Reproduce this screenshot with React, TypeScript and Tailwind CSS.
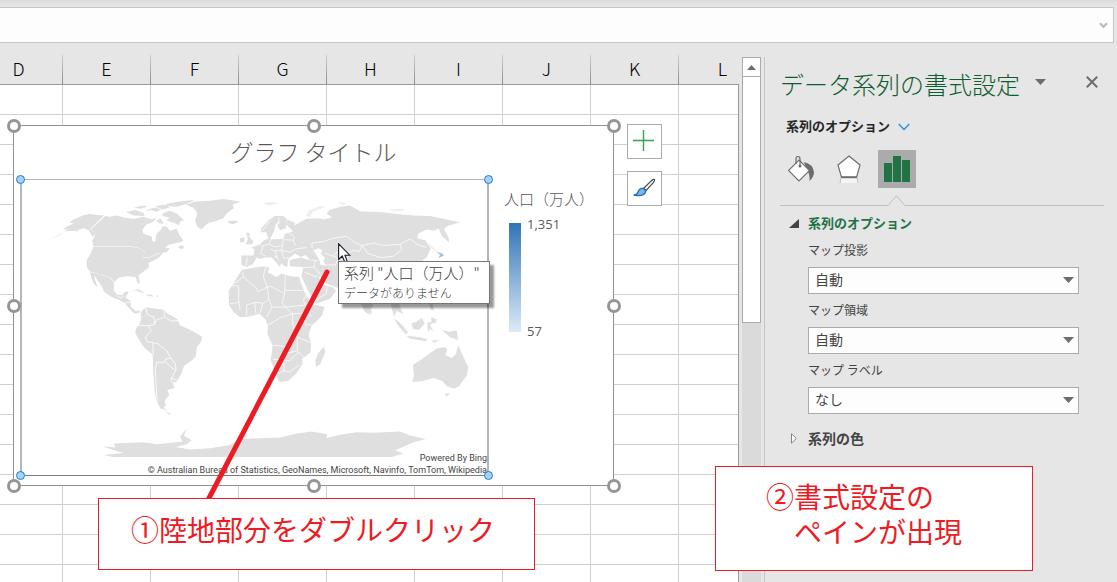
import React from "react";

const columns = ["D", "E", "F", "G", "H", "I", "J", "K", "L"];
const rows = Array.from({ length: 17 }, (_, i) => i + 1);

const jp = "font-['Noto_Sans_CJK_JP',sans-serif]";

function DownTriangle() {
  return (
    <svg className="h-[6px] w-[11px]" viewBox="0 0 11 6" aria-hidden="true">
      <path d="M0 0H11L5.5 6Z" fill="#6d6d6d" />
    </svg>
  );
}

function FormulaBar() {
  return (
    <div className="shrink-0 bg-gradient-to-b from-[#dcdcdc] to-[#e6e6e6] to-[6px] pr-[3px] pt-[7px]">
      <div className="flex h-9 items-center border border-l-0 border-[#c6c6c6] bg-[#fdfdfd] pr-[5px]">
        <input aria-label="数式バー" className="h-full min-w-0 flex-1 bg-transparent px-2 outline-none" />
        <button aria-label="数式バーの展開" className="p-0">
          <svg width="9" height="7" viewBox="0 0 9 7">
            <path d="M1 1.2L4.5 4.8L8 1.2" fill="none" stroke="#bcbcbc" strokeWidth="2.2" />
          </svg>
        </button>
      </div>
    </div>
  );
}

function Grid() {
  return (
    <table className="-ml-[25px] w-[792px] table-fixed border-separate border-spacing-0">
      <thead>
        <tr>
          {columns.map((c) => (
            <th key={c} className="h-[42px] border-b border-[#999] bg-[#e6e6e6] p-0 align-bottom font-light">
              <div className="flex h-[29px]">
                <span className="flex-1 text-center text-[18px] leading-[26px] text-black">{c}</span>
                <span className={c === "L" ? "w-px" : "w-px bg-gradient-to-b from-[#d0d0d0] to-[#8c8c8c]"} />
              </div>
            </th>
          ))}
        </tr>
      </thead>
      <tbody>
        {rows.map((r) => (
          <tr key={r}>
            {columns.map((c) => (
              <td key={c} className="h-[30px] border-b border-r border-[#d0d0d0] bg-white p-0" />
            ))}
          </tr>
        ))}
      </tbody>
    </table>
  );
}

function WorldMap() {
  return (
    <svg className="block h-full w-full" viewBox="22 180 465 294" preserveAspectRatio="none" role="img" aria-label="世界地図">
      {/* Americas */}
      <g transform="translate(10 170) scale(.33333)" fill="#dfdfdf">
        <path d="M105 211L130 203L150 196L162 187L150 191L128 202Z" opacity=".4" />
        <path d="M158 178L172 168L192 160L178 157L186 150L205 142L222 135L240 132L262 135L282 136L240 177L250 182L254 196L248 200L236 180L222 174L208 178L200 184L190 182L164 184L172 178Z" />
        <path d="M286 138L300 140L320 136L345 143L372 146L400 140L425 148L440 142L428 156L408 164L397 180L400 190L425 200L428 214L436 214L440 190L452 180L458 168L470 170L480 182L500 176L508 194L521 212L510 216L498 218L475 224L466 232L480 234L470 246L440 250L418 262L400 262L404 245L390 234L370 229L250 229L247 210L256 196L250 182L243 177Z" />
        <path d="M250 230L370 230L390 235L403 246L400 263L418 263L440 252L462 246L446 262L428 272L415 278L418 290L400 304L386 314L389 336L386 342L381 334L378 320L350 318L326 322L314 334L302 322L288 318L268 310L240 304L231 292L230 270L242 250Z" />
        <path d="M240 306L268 311L288 319L300 323L312 336L311 360L322 373L338 374L344 364L356 363L350 376L346 382L362 392L362 408L376 422L390 420L388 427L374 430L358 414L345 398L325 388L305 380L282 364L276 350L258 322L252 314L256 332L263 352L252 340L244 322Z" />
        <path d="M458 130L478 122L500 130L522 150L510 154L508 166L492 158L470 152L478 142L458 138ZM348 126L375 120L400 128L404 138L370 136ZM372 112L392 116L412 110L398 106ZM406 124L424 120L440 126L452 118L438 112L420 116ZM472 100L510 94L555 89L530 102L500 110L466 108ZM438 150L452 146L462 160L448 160ZM436 108L462 104L480 112L456 118Z" />
        <path d="M504 230L516 224L524 234L512 236Z" />
        <path d="M528 104L555 94L600 92L640 87L692 94L668 104L672 114L660 122L650 130L640 144L614 154L596 158L586 166L575 178L562 170L555 152L562 130L552 114Z" />
        <path d="M652 157L660 152L680 152L684 156L668 162Z" />
        <path d="M366 361L384 356L406 368L392 366L378 360ZM408 372L426 373L430 378L414 377ZM438 376L446 376L446 378L438 378Z" />
        <path d="M392 426L408 410L430 414L462 418L472 430L486 436L502 446L510 464L545 480L576 498L574 512L560 530L557 558L545 570L522 586L515 606L500 634L488 636L494 652L472 658L478 672L464 690L468 704L460 712L474 718L452 714L440 694L434 660L430 600L428 552L405 534L390 512L376 488L378 474L388 462L394 446Z" />
        <path d="M462 716L478 728L488 730L476 731Z" />
        <path
          d="M408 412L412 432L432 440L434 462L414 466L388 464M462 418L464 440L484 452L504 450M462 440L440 448L434 460M414 466L424 480L406 500L412 514L428 516L430 552M428 516L444 520L470 540L482 562L466 566L460 576L440 574L436 600L442 700M482 562L496 580L498 598L486 592L464 572M498 598L484 622L486 636M484 622L504 630M320 376L334 384L342 376M346 398L362 394"
          fill="none" stroke="#fff" strokeWidth="2.4"
        />
      </g>
      {/* Africa and Eurasia */}
      <g transform="translate(240 170) scale(.33333)" fill="#dfdfdf">
        <path d="M5 299L30 294L72 288L88 292L84 306L110 320L124 310L150 318L178 320L184 332L200 372L222 402L254 410L246 436L215 466L206 490L213 520L212 545L186 566L188 580L170 606L146 630L118 634L108 610L92 570L98 525L82 490L84 466L76 446L58 430L28 438L0 440L-20 424L-33 404L-34 362L-18 336Z" />
        <path d="M252 528L256 545L240 582L228 588L226 570L234 548Z" />
        <path d="M4 256L40 256L50 262L38 282L20 290L4 284Z" />
        <path d="M50 262L40 256L44 238L34 232L60 222L72 210L84 206L82 196L92 198L92 208L130 206L134 192L146 188L160 184L150 174L138 162L142 148L165 158L162 166L174 160L200 146L235 144L250 148L276 142L260 130L268 120L300 110L330 106L362 124L420 126L470 132L520 136L570 138L610 146L660 156L640 162L620 168L612 178L626 202L627 217L606 198L596 176L580 182L560 178L535 190L532 204L556 210L572 235L560 262L548 270L532 285L540 330L510 375L480 385L478 405L490 430L470 422L462 440L452 400L430 380L400 402L387 432L374 424L355 380L320 365L292 352L256 338L240 316L236 322L256 346L278 350L288 362L270 385L230 399L220 392L200 352L184 318L190 290L150 288L148 270L180 262L212 270L196 254L182 260L165 250L150 262L144 268L142 290L128 284L110 258L100 254L124 276L120 290L96 262L75 262L60 266Z" />
        <path d="M62 186L64 174L86 150L104 138L130 138L140 146L138 174L120 180L112 166L122 152L106 164L102 184L94 200L84 200L78 186Z" />
        <path d="M18 186L30 190L28 200L40 214L36 222L16 222L24 208ZM0 204L14 202L12 216L0 216Z" />
        <path d="M66 100L92 95L118 99L90 106ZM198 138L205 122L240 108L258 110L218 124L212 140ZM286 96L320 98L312 106ZM448 118L490 116L492 122L460 124Z" opacity=".5" />
        <path d="M220 240L236 234L248 240L242 250L256 264L250 272L258 286L242 284L238 268Z" fill="#fff" />
        <path d="M176 319L188 336L204 372L224 401L214 396L194 366Z" fill="#fff" />
        <path d="M560 215L580 232L598 248L594 250L574 234Z" opacity=".5" />
        <path d="M388 418L396 424L392 434ZM566 395L578 400L582 420L572 418ZM574 440L590 446L586 460L574 454Z" />
        <path
          d="M8 304L10 320L-28 346L-4 346L-4 396L-30 400M10 320L48 352L54 364L82 350L70 320L76 292M82 350L92 348L134 370L136 314M136 360L190 360M82 350L86 386L72 398L44 396L20 404L20 434M134 370L126 396L136 410L196 404L190 390L200 372M86 386L96 410L80 440M96 410L136 410L158 430L190 428L214 436M190 428L196 460L214 464M80 466L120 442L158 430M158 430L158 460L172 500L212 516M100 524L136 528L140 548L172 540L172 500M98 566L150 570L176 544L196 566M132 576L132 600L114 608M132 600L150 604L176 584M60 428L68 400M44 396L48 430M-2 396L0 420"
          fill="none" stroke="#fff" strokeWidth="2.2"
        />
        <path
          d="M66 184L90 152M118 142L114 162M92 208L88 222L70 226L62 250L78 258M88 222L104 230L128 226L130 208M128 226L124 240L104 242L92 236M124 240L150 246L168 236L200 232M130 208L160 210L166 226M146 188L164 200L160 210M60 222L68 230M104 242L112 258M124 240L132 264L150 262M216 234L216 218L250 214L280 204L320 198L340 214L366 226L358 244L336 240L322 254L290 246L280 258L256 250M366 226L400 218L430 226L480 222L510 206L534 224L560 232M366 226L384 250L424 262L460 258L486 238L480 222M212 270L238 270M190 292L222 290L242 314M222 290L226 270M194 306L224 318L234 318M214 396L240 382L258 370L262 350M256 284L286 284L296 264L280 258M22 260L18 288M322 254L324 272"
          fill="none" stroke="#fff" strokeWidth="2.2"
        />
        <path d="M592 246L604 248L612 256L602 260L596 264L600 254Z" fill="#9cc3e6" />
      </g>
      {/* Oceania and Antarctica */}
      <g transform="translate(240 320) scale(.33333)" fill="#dfdfdf">
        <path d="M516 184L522 166L519 132L545 116L575 94L590 84L614 80L622 86L616 104L636 112L648 100L655 74L666 100L685 140L680 165L655 198L640 204L620 196L606 180L580 172L545 182Z" />
        <path d="M614 218L630 218L620 228Z" />
        <path d="M462 -6L476 4L492 20L504 36L498 42L478 20ZM500 46L540 50L562 56L558 62L508 54ZM514 8L530 4L545 -8L554 8L538 28L520 26ZM562 6L590 2L570 12L580 34L570 24L564 36ZM605 28L624 34L650 30L654 58L630 50L618 40ZM572 60L600 58L584 66Z" />
        <path d="M-412 376L-374 380L-378 368L-290 364L-250 370L-172 362L-180 348L-160 322L-168 344L-145 358L-160 370L-192 378L-150 386L-90 382L-30 372L0 354L120 350L170 338L215 332L262 340L258 352L300 342L350 334L400 336L480 332L510 344L558 354L520 364L480 382L465 388L490 398L455 408L-380 408L-410 402L-350 396L-390 384Z" />
      </g>
    </svg>
  );
}

function Handle({ place }: { place: string }) {
  return <span className={`absolute size-[14px] rounded-full border-[3px] border-[#959595] bg-white ${place}`} />;
}

function PlotHandle({ place }: { place: string }) {
  return <span className={`absolute size-[9px] rounded-full border border-[#1a7fd6] bg-[#a9d1f2] ${place}`} />;
}

function Chart() {
  return (
    <section className="absolute left-[13px] top-[82px] flex h-[361px] w-[601px] flex-col border border-[#919191] bg-white">
      <h2 className="h-[53px] text-center text-[23px] font-light leading-[50px] text-[#595959]">グラフ タイトル</h2>
      <div className="flex flex-1 pl-[6px]">
        <div className="relative mb-[9px] w-[469px] border border-b-[#7c7c7c] border-l-2 border-r-2 border-[#b5b5b5]">
          <WorldMap />
          <p className="absolute -bottom-px right-0 whitespace-nowrap text-right font-['Roboto',sans-serif] text-[9px] leading-3 text-[#444]">
            Powered By Bing
            <br />© Australian Bureau of Statistics, GeoNames, Microsoft, Navinfo, TomTom, Wikipedia
          </p>
          <PlotHandle place="-left-[6px] -top-[5px]" />
          <PlotHandle place="-right-[6px] -top-[5px]" />
          <PlotHandle place="-bottom-[5px] -left-[6px]" />
          <PlotHandle place="-bottom-[5px] -right-[6px]" />
        </div>
        <div className="pl-[15px] pt-[9px] text-[#595959]">
          <h3 className="whitespace-nowrap text-[15px] font-light leading-[22px]">人口（万人）</h3>
          <div className="flex pl-[5px] pt-[13px]">
            <div className="h-[109px] w-[12px] bg-gradient-to-b from-[#2e75b6] to-[#deebf7]" />
            <div className="-my-[9px] flex flex-col justify-between pl-[6px] font-['Open_Sans',sans-serif] text-[13px] leading-5">
              <span>1,351</span>
              <span>57</span>
            </div>
          </div>
        </div>
      </div>
      <Handle place="-left-[7px] -top-[7px]" />
      <Handle place="left-[293px] -top-[7px]" />
      <Handle place="-right-[8px] -top-[7px]" />
      <Handle place="-left-[7px] top-[173px]" />
      <Handle place="-right-[8px] top-[173px]" />
      <Handle place="-bottom-[8px] -left-[7px]" />
      <Handle place="-bottom-[8px] left-[293px]" />
      <Handle place="-bottom-[8px] -right-[8px]" />
    </section>
  );
}

function ChartButtons() {
  const box = "flex size-[35px] items-center justify-center border border-[#ababab] bg-white";
  return (
    <div className="absolute left-[627px] top-[81px] flex flex-col gap-3">
      <button aria-label="グラフ要素" className={box}>
        <svg width="23" height="23" viewBox="0 0 23 23">
          <path d="M10.5 0V21M0 10.5H21" stroke="#3a9f54" strokeWidth="1.4" />
        </svg>
      </button>
      <button aria-label="グラフ スタイル" className={box}>
        <svg width="23" height="21" viewBox="0 0 23 21" strokeLinejoin="round">
          <path d="M10.5 10.5L18.5 2.6Q21 .8 21.5 1.5Q22 2 20.3 4.6L13 12.6Z" fill="#fff" stroke="#4d4d4d" strokeWidth="1.3" />
          <path d="M1 17Q4 17 5 14Q6.4 10.2 9.6 10.4Q13 11.2 12.4 14.2Q10.5 19 1 17Z" fill="#7ab8ea" stroke="#1f6fb8" strokeWidth="1.4" />
        </svg>
      </button>
    </div>
  );
}

function Tooltip() {
  return (
    <div role="tooltip" className="absolute left-[338px] top-[218px] h-[43px] w-[152px] whitespace-nowrap border border-[#767676] bg-white pl-[5px] pt-px font-light text-[#404040] shadow-[4px_4px_2px_rgba(0,0,0,0.4)]">
      <div className="text-[15px] leading-[20px]">系列 "人口（万人）"</div>
      <div className="text-[12px] leading-[20px]">データがありません</div>
    </div>
  );
}

function Sheet() {
  return (
    <main className="relative min-w-0 flex-1 overflow-hidden">
      <Grid />
      <span className="absolute bottom-0 right-0 top-[41px] w-px bg-[#999]" />
      <Chart />
      <ChartButtons />
      <svg className="absolute left-[338px] top-[200px]" width="13" height="20" viewBox="0 0 13 20" aria-hidden="true">
        <path d="M.6 .8V16.4L4.2 13L6.8 19H9.4L7 12.2H11.8Z" fill="#fff" stroke="#1c1c28" strokeWidth="1.1" />
      </svg>
      <Tooltip />
      <svg className="absolute left-[200px] top-[224px]" width="134" height="236" viewBox="0 0 134 236" aria-hidden="true">
        <path d="M127 5L8 233" stroke="#ed1c24" strokeWidth="5" strokeLinecap="round" />
      </svg>
      <div className="absolute left-[98px] top-[455px] h-[72px] w-[437px] border border-[#ed1c24] bg-white pl-[32px] text-[28px] leading-[60px] text-[#ed1c24]">
        ①陸地部分をダブルクリック
      </div>
    </main>
  );
}

function ScrollBar() {
  return (
    <div className="flex w-[25px] shrink-0 px-[3px] pt-[14px]">
      <div className="flex w-[19px] flex-col bg-[#dadada]">
        <button aria-label="上へスクロール" className="flex h-[20px] items-center justify-center border border-[#ababab] bg-white">
          <svg width="9" height="5" viewBox="0 0 9 5">
            <path d="M0 5H9L4.5 0Z" fill="#6d6d6d" />
          </svg>
        </button>
        <div className="-mt-px h-[247px] border border-[#ababab] bg-white" />
      </div>
    </div>
  );
}

function Field({ id, label, options }: { id: string; label: string; options: string[] }) {
  return (
    <div className="mb-[6px]">
      <label htmlFor={id} className="block h-[20px] text-[12px] leading-[20px] text-[#444]">{label}</label>
      <div className="relative mt-[7px]">
        <select id={id} className="block h-[27px] w-full appearance-none rounded-none border border-[#ababab] bg-[#fdfdfd] pb-[2px] pl-[6px] text-[14px] leading-[23px] text-[#444]">
          {options.map((o) => (
            <option key={o}>{o}</option>
          ))}
        </select>
        <span className="pointer-events-none absolute right-[5px] top-[10px] flex">
          <DownTriangle />
        </span>
      </div>
    </div>
  );
}

function FormatPane() {
  const tab = "flex size-[38px] items-center justify-center";
  return (
    <aside className="mt-[14px] w-[353px] shrink-0 border-l border-[#c6c6c6] pl-[15px] pr-[13px]">
      <div className="flex h-[54px] items-center">
        <h1 className="whitespace-nowrap text-[24px] font-light leading-[54px] text-[#0e5c2f]">データ系列の書式設定</h1>
        <button aria-label="作業ウィンドウ オプション" className="-mt-1 ml-[15px]">
          <DownTriangle />
        </button>
        <button aria-label="閉じる" className="-mt-1 ml-auto mr-[6px]">
          <svg width="12" height="12" viewBox="0 0 12 12">
            <path d="M.8 .8L11.2 11.2M11.2 .8L.8 11.2" stroke="#6d6d6d" strokeWidth="2" />
          </svg>
        </button>
      </div>
      <button className="flex h-[30px] items-center gap-2 pl-[6px] text-[13px] font-bold text-[#262626]">
        系列のオプション
        <svg className="mt-[2px]" width="12" height="8" viewBox="0 0 12 8" aria-hidden="true">
          <path d="M.7 .9L6 6.5L11.3 .9" fill="none" stroke="#2b8fdb" strokeWidth="1.4" />
        </svg>
      </button>
      <div className="mt-[9px] flex gap-[10px] pl-[2px]">
        <button aria-label="塗りつぶしと線" className={tab}>
          <svg width="28" height="28" viewBox="0 0 28 28">
            <path d="M17 7Q26 9 27 17Q27 22 22.5 26Q23 19 20 15Z" fill="#6d6d6d" />
            <path d="M12 5L22.5 15.5L12 26L1.5 15.5Z" fill="#fff" stroke="#6d6d6d" strokeWidth="1.1" />
            <path d="M9 9V4Q9 1.5 11 1.5Q13 1.5 13 4V10" fill="none" stroke="#6d6d6d" strokeWidth="1.2" />
            <circle cx="13" cy="11" r="1.5" fill="#6d6d6d" />
          </svg>
        </button>
        <button aria-label="効果" className={tab}>
          <svg width="26" height="30" viewBox="0 0 26 30">
            <path d="M5 24H21L22 29H4Z" fill="#f5f5f5" />
            <path d="M5 24L4 29M21 24L22 29" stroke="#bdbdbd" />
            <path d="M13 2L24 11L20.5 23.5H5.5L2 11Z" fill="#fff" stroke="#6d6d6d" strokeWidth="1.2" />
            <path d="M5.5 23.2H20.5" stroke="#6d6d6d" strokeWidth="2" />
          </svg>
        </button>
        <button aria-label="系列のオプション" aria-pressed="true" className={`${tab} bg-[#ababab]`}>
          <svg width="26" height="26" viewBox="0 0 26 26" fill="#217346">
            <path d="M0 7H8V26H0ZM9 0H17V26H9ZM18 4H26V26H18Z" />
          </svg>
        </button>
      </div>
      <div className="relative h-[18px] border-b border-[#c0c0c0]">
        <svg className="absolute -bottom-px left-[108px]" width="17" height="11" viewBox="0 0 17 11" aria-hidden="true">
          <path d="M0 10.5L8.5 .8L17 10.5V11H0Z" fill="#e6e6e6" />
          <path d="M0 10.5L8.5 .8L17 10.5" fill="none" stroke="#c0c0c0" />
        </svg>
      </div>
      <button className="flex h-[34px] items-center gap-[9px] pl-[9px] text-[13px] font-bold text-[#217346]">
        <svg width="10" height="9" viewBox="0 0 10 9" aria-hidden="true">
          <path d="M10 0V9H0Z" fill="#444" />
        </svg>
        系列のオプション
      </button>
      <div className="pl-[28px] pr-[25px]">
        <Field id="projection" label="マップ投影" options={["自動"]} />
        <Field id="area" label="マップ領域" options={["自動"]} />
        <Field id="labels" label="マップ ラベル" options={["なし"]} />
      </div>
      <button className="mt-[7px] flex h-[34px] items-center gap-[11px] pl-[11px] text-[14px] font-bold text-[#444]">
        <svg width="6" height="11" viewBox="0 0 6 11" aria-hidden="true">
          <path d="M.5 .8L5.3 5.5L.5 10.2Z" fill="#fff" stroke="#777" strokeWidth=".9" />
        </svg>
        系列の色
      </button>
    </aside>
  );
}

export default function App() {
  return (
    <div className={`relative flex h-screen flex-col overflow-hidden bg-[#e6e6e6] ${jp}`}>
      <FormulaBar />
      <div className="flex min-h-0 flex-1">
        <Sheet />
        <ScrollBar />
        <FormatPane />
      </div>
      <p className="absolute left-[715px] top-[466px] h-[105px] w-[318px] border border-[#ed1c24] bg-white pl-[50px] pt-[12px] text-[28px] leading-[35px] text-[#ed1c24]">
        ②書式設定の
        <br />
        {"　ペインが出現"}
      </p>
    </div>
  );
}
